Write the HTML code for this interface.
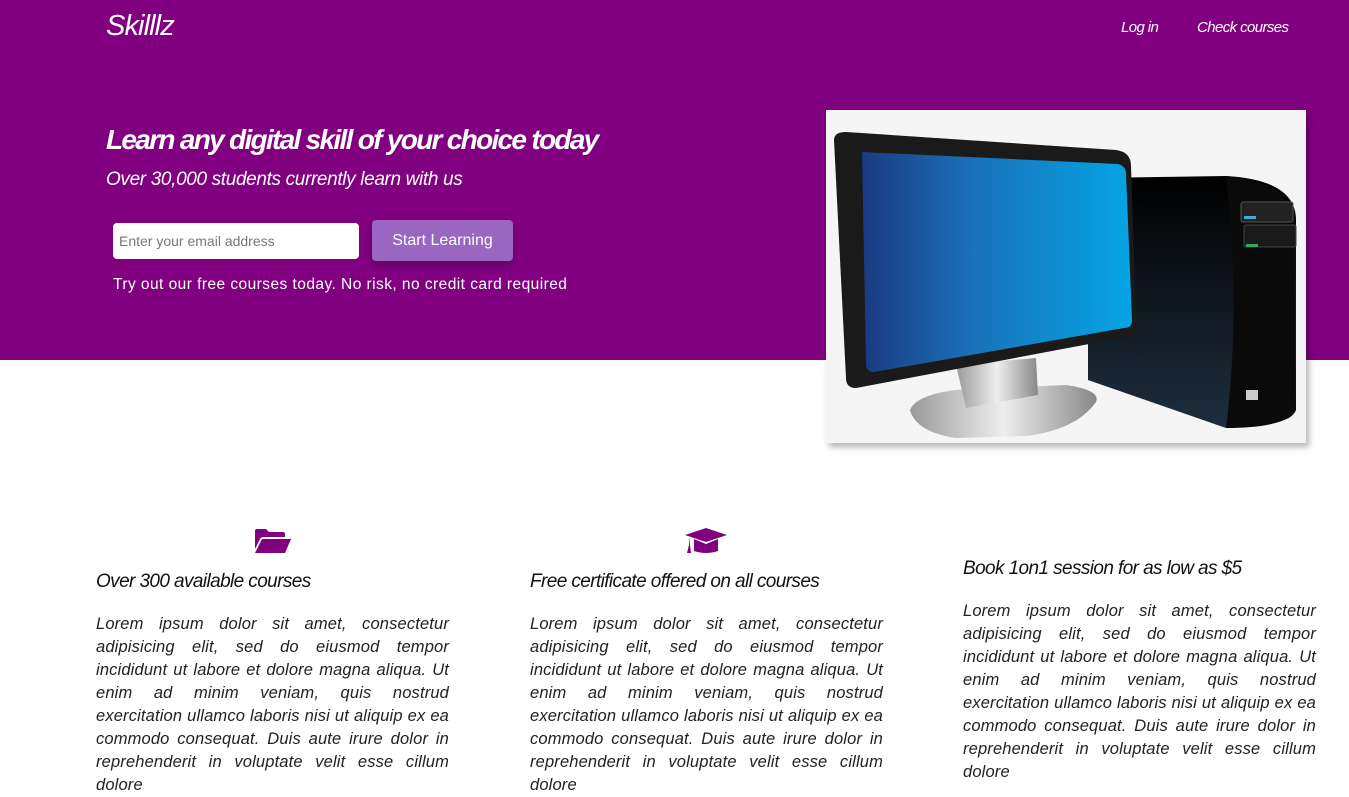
<!DOCTYPE html>
<html><head><style>
*{margin:0;padding:0;box-sizing:border-box}
body{width:1349px;height:765px;overflow:hidden;background:#fff;font-family:"Liberation Sans",sans-serif;position:relative}
.hero{position:absolute;left:0;top:0;width:1349px;height:360px;background:#800080}
.abs{position:absolute;white-space:nowrap}
.w{color:#fff;font-style:italic}
.logo{left:106px;top:10px;font-size:29px;letter-spacing:-0.9px}
.nav{top:19px;font-size:15px;letter-spacing:-0.6px}
h1{position:absolute;left:106px;top:124px;font-size:28px;font-weight:bold;letter-spacing:-1.7px;color:#fff;font-style:italic;white-space:nowrap}
.sub{left:106px;top:169px;font-size:19px;letter-spacing:-0.35px}
.inp{position:absolute;left:113px;top:223px;width:246px;height:36px;background:#fff;border-radius:4px;color:#777;font-size:14px;padding:10px 6px}
.btn{position:absolute;left:372px;top:220px;width:141px;height:41px;background:#9966c2;border-radius:4px;color:#fff;font-size:16px;text-align:center;line-height:41px;box-shadow:0 4px 8px rgba(0,0,0,.25)}
.try{left:113px;top:276px;font-size:15.5px;color:#fff;letter-spacing:0.45px}
.img{position:absolute;left:826px;top:110px;width:480px;height:333px;background:#f5f5f5;box-shadow:3px 4px 6px rgba(0,0,0,.3)}
.col{position:absolute;width:353px}
.col h3{font-size:19px;font-weight:normal;font-style:italic;letter-spacing:-0.6px;color:#111;white-space:nowrap}
.col p{margin-top:20px;font-size:16.5px;line-height:23px;font-style:italic;text-align:justify;color:#222;letter-spacing:0.15px}
</style></head><body>
<div class="hero"></div>
<div class="abs w logo">Skilllz</div>
<div class="abs w nav" style="left:1121px">Log in</div>
<div class="abs w nav" style="left:1197px">Check courses</div>
<h1>Learn any digital skill of your choice today</h1>
<div class="abs w sub">Over 30,000 students currently learn with us</div>
<div class="inp">Enter your email address</div>
<div class="btn">Start Learning</div>
<div class="abs try">Try out our free courses today. No risk, no credit card required</div>
<div class="img">
<svg width="480" height="333" viewBox="0 0 480 333">
<defs>
<linearGradient id="sc" x1="0" x2="1"><stop offset="0" stop-color="#1a3a80"/><stop offset=".4" stop-color="#1a70b8"/><stop offset="1" stop-color="#05a5e5"/></linearGradient>
<linearGradient id="tw" x1="0" y1="0" x2="0" y2="1"><stop offset="0" stop-color="#000"/><stop offset="1" stop-color="#1e2e3e"/></linearGradient>
<linearGradient id="st" x1="0" x2="1"><stop offset="0" stop-color="#999"/><stop offset=".5" stop-color="#eee"/><stop offset="1" stop-color="#888"/></linearGradient>
</defs>
<path d="M262 68 L400 66 Q470 70 470 110 L470 300 Q465 315 420 315 L400 318 L262 270 Z" fill="url(#tw)"/>
<path d="M400 66 Q460 70 468 110 L470 300 Q460 318 400 318 Q415 200 400 66Z" fill="#0a0a0a"/>
<rect x="415" y="92" width="52" height="20" rx="2" fill="#222" stroke="#555"/>
<rect x="418" y="115" width="52" height="22" rx="2" fill="#1a1a1a" stroke="#444"/>
<rect x="418" y="106" width="12" height="3" fill="#4ac"/>
<rect x="420" y="134" width="12" height="3" fill="#3a6"/>
<rect x="420" y="280" width="12" height="10" fill="#ccc"/>
<path d="M84 300 Q90 285 130 280 L240 275 Q275 280 270 292 Q250 320 200 326 L130 328 Q90 322 84 300 Z" fill="url(#st)"/>
<path d="M130 255 L210 248 L212 285 L140 298 Z" fill="url(#st)"/>
<path d="M8 30 Q8 22 20 22 L290 40 Q305 42 305 56 L310 212 Q308 228 295 228 L30 278 Q20 278 20 268 Z" fill="#1a1a1a"/>
<path d="M36 42 L292 54 Q300 56 300 64 L306 210 Q306 218 298 218 L48 262 Q40 262 40 254 Z" fill="url(#sc)"/>
</svg>
</div>
<svg class="abs" style="left:254px;top:529px" width="38" height="25" viewBox="0 0 38 25"><path d="M1 2 Q1 0 3 0 L12 0 L15 3 L29 3 Q31 3 31 5 L31 8 L10 8 Q7 8 6 10 L1 20 Z M8 10 L37 10 L31 24 L1 24 Z" fill="#800080"/></svg>
<svg class="abs" style="left:685px;top:528px" width="42" height="26" viewBox="0 0 42 26"><path d="M21 0 L42 7 L21 14 L0 7 Z M9 11 L21 16 L33 11 L33 23 Q21 27 9 23 Z M4 9 L4 17 L2 25 L6 25 L5 17 Z" fill="#800080"/></svg>
<div class="col" style="left:96px;top:571px"><h3>Over 300 available courses</h3><p>Lorem ipsum dolor sit amet, consectetur adipisicing elit, sed do eiusmod tempor incididunt ut labore et dolore magna aliqua. Ut enim ad minim veniam, quis nostrud exercitation ullamco laboris nisi ut aliquip ex ea commodo consequat. Duis aute irure dolor in reprehenderit in voluptate velit esse cillum dolore</p></div>
<div class="col" style="left:530px;top:571px"><h3>Free certificate offered on all courses</h3><p>Lorem ipsum dolor sit amet, consectetur adipisicing elit, sed do eiusmod tempor incididunt ut labore et dolore magna aliqua. Ut enim ad minim veniam, quis nostrud exercitation ullamco laboris nisi ut aliquip ex ea commodo consequat. Duis aute irure dolor in reprehenderit in voluptate velit esse cillum dolore</p></div>
<div class="col" style="left:963px;top:558px"><h3>Book 1on1 session for as low as $5</h3><p>Lorem ipsum dolor sit amet, consectetur adipisicing elit, sed do eiusmod tempor incididunt ut labore et dolore magna aliqua. Ut enim ad minim veniam, quis nostrud exercitation ullamco laboris nisi ut aliquip ex ea commodo consequat. Duis aute irure dolor in reprehenderit in voluptate velit esse cillum dolore</p></div>
</body></html>
